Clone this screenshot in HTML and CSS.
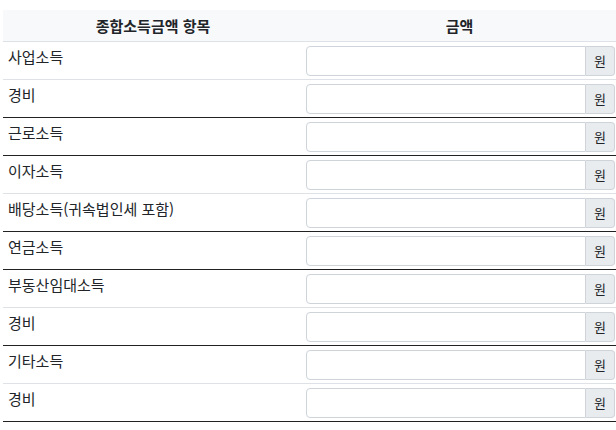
FILE: index.html
```html
<!DOCTYPE html>
<html lang="ko">
<head>
    <meta charset="UTF-8">
    <meta name="viewport" content="width=device-width, initial-scale=1.0">
    <title>종합소득금액</title>
    <link rel="stylesheet" href="styles.css">
</head>
<body>
    <table class="income-table">
        <thead>
            <tr>
                <th class="col-label">종합소득금액 항목</th>
                <th>금액</th>
            </tr>
        </thead>
        <tbody>
            <tr>
                <td>사업소득</td>
                <td><div class="input-group"><input type="text"><span class="unit">원</span></div></td>
            </tr>
            <tr class="group-end">
                <td>경비</td>
                <td><div class="input-group"><input type="text"><span class="unit">원</span></div></td>
            </tr>
            <tr class="group-end">
                <td>근로소득</td>
                <td><div class="input-group"><input type="text"><span class="unit">원</span></div></td>
            </tr>
            <tr>
                <td>이자소득</td>
                <td><div class="input-group"><input type="text"><span class="unit">원</span></div></td>
            </tr>
            <tr class="group-end">
                <td>배당소득(귀속법인세 포함)</td>
                <td><div class="input-group"><input type="text"><span class="unit">원</span></div></td>
            </tr>
            <tr class="group-end">
                <td>연금소득</td>
                <td><div class="input-group"><input type="text"><span class="unit">원</span></div></td>
            </tr>
            <tr>
                <td>부동산임대소득</td>
                <td><div class="input-group"><input type="text"><span class="unit">원</span></div></td>
            </tr>
            <tr class="group-end">
                <td>경비</td>
                <td><div class="input-group"><input type="text"><span class="unit">원</span></div></td>
            </tr>
            <tr>
                <td>기타소득</td>
                <td><div class="input-group"><input type="text"><span class="unit">원</span></div></td>
            </tr>
            <tr class="group-end">
                <td>경비</td>
                <td><div class="input-group"><input type="text"><span class="unit">원</span></div></td>
            </tr>
        </tbody>
    </table>
</body>
</html>
```

FILE: styles.css
```css
body {
  font-family: "Noto Sans CJK KR", "Noto Sans", sans-serif;
  margin: 10px 0 0 3px;
  color: #212529;
  background: #fff;
}
.income-table {
  width: 613px;
  border-collapse: collapse;
  font-size: 15px;
}
.income-table th {
  background-color: #f8f9fa;
  font-weight: bold;
  text-align: center;
  line-height: 22px;
  padding: 5px 0 4px;
  border-bottom: 1px solid #dee2e6;
}
.col-label {
  width: 300px;
}
.income-table td {
  border-bottom: 1px solid #dee2e6;
  vertical-align: top;
  line-height: 22px;
  padding: 4px 0 3px 5px;
}
.income-table td + td {
  padding: 4px 1px 3px 3px;
}
.income-table tr.group-end td {
  border-bottom: 1px solid #222;
}
.input-group {
  display: flex;
  height: 30px;
}
.input-group input {
  flex: 1;
  min-width: 0;
  margin: 0;
  padding: 0 8px;
  border: 1px solid #ced4da;
  border-radius: 4px 0 0 4px;
  font-size: 14px;
  box-sizing: border-box;
}
.unit {
  display: flex;
  align-items: center;
  justify-content: center;
  width: 29px;
  box-sizing: border-box;
  background-color: #e9ecef;
  border: 1px solid #ced4da;
  border-left: none;
  border-radius: 0 4px 4px 0;
  font-size: 13px;
}
```
